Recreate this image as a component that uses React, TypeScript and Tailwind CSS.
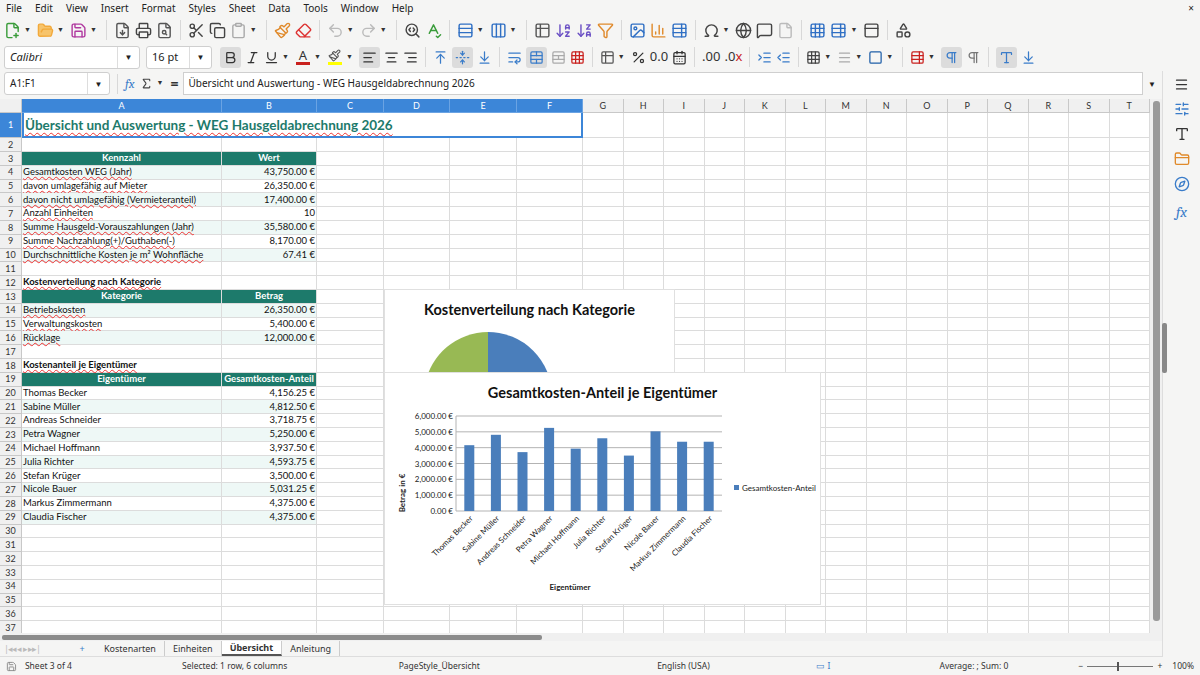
import React from "react";
import {
  FilePlus2, FolderOpen, Save, FileDown, Printer, FileSearch, Scissors, Copy, Clipboard,
  Paintbrush, Eraser, Undo2, Redo2, SearchCode, SpellCheck, Rows3, Columns3, ArrowDownAZ,
  ArrowDownZA, Filter, Image, BarChart3, Table2, Omega, Globe, MessageSquare, File,
  TableProperties, Grid3x3, PanelTop, Shapes, Bold, Italic, Underline, AlignLeft, AlignCenter,
  AlignRight, ArrowUpToLine, FoldVertical, ArrowDownToLine, WrapText, TableCellsMerge,
  TableCellsSplit, Percent, CalendarDays, IndentIncrease, IndentDecrease, Square, Pilcrow,
  Menu, SlidersHorizontal, Type, FolderClosed, Compass, Sigma,
} from "lucide-react";

const COLS = ["A", "B", "C", "D", "E", "F", "G", "H", "I", "J", "K", "L", "M", "N", "O", "P", "Q", "R", "S", "T"];
const COLW = [
  "w-[200px]", "w-[95px]", "w-[67px]", "w-[66px]", "w-[67px]", "w-[66px]",
  "w-[40.5px]", "w-[40.5px]", "w-[40.5px]", "w-[40.5px]", "w-[40.5px]", "w-[40.5px]", "w-[40.5px]",
  "w-[40.5px]", "w-[40.5px]", "w-[40.5px]", "w-[40.5px]", "w-[40.5px]", "w-[40.5px]", "w-[40.5px]",
];

type Cell = { a?: string; b?: string; kind?: "head" | "light" | "plain" | "section" };
const DATA: Record<number, Cell> = {
  3: { a: "Kennzahl", b: "Wert", kind: "head" },
  4: { a: "Gesamtkosten WEG (Jahr)", b: "43,750.00 €", kind: "light" },
  5: { a: "davon umlagefähig auf Mieter", b: "26,350.00 €", kind: "plain" },
  6: { a: "davon nicht umlagefähig (Vermieteranteil)", b: "17,400.00 €", kind: "light" },
  7: { a: "Anzahl Einheiten", b: "10", kind: "plain" },
  8: { a: "Summe Hausgeld-Vorauszahlungen (Jahr)", b: "35,580.00 €", kind: "light" },
  9: { a: "Summe Nachzahlung(+)/Guthaben(-)", b: "8,170.00 €", kind: "plain" },
  10: { a: "Durchschnittliche Kosten je m² Wohnfläche", b: "67.41 €", kind: "light" },
  12: { a: "Kostenverteilung nach Kategorie", kind: "section" },
  13: { a: "Kategorie", b: "Betrag", kind: "head" },
  14: { a: "Betriebskosten", b: "26,350.00 €", kind: "light" },
  15: { a: "Verwaltungskosten", b: "5,400.00 €", kind: "plain" },
  16: { a: "Rücklage", b: "12,000.00 €", kind: "light" },
  18: { a: "Kostenanteil je Eigentümer", kind: "section" },
  19: { a: "Eigentümer", b: "Gesamtkosten-Anteil", kind: "head" },
};

const OWNERS: [string, number][] = [
  ["Thomas Becker", 4156.25], ["Sabine Müller", 4812.5], ["Andreas Schneider", 3718.75],
  ["Petra Wagner", 5250], ["Michael Hoffmann", 3937.5], ["Julia Richter", 4593.75],
  ["Stefan Krüger", 3500], ["Nicole Bauer", 5031.25], ["Markus Zimmermann", 4375],
  ["Claudia Fischer", 4375],
];
OWNERS.forEach(([n, v], i) => {
  DATA[20 + i] = {
    a: n,
    b: v.toLocaleString("en-US", { minimumFractionDigits: 2 }) + " €",
    kind: i % 2 === 1 ? "light" : "plain",
  };
});

const ic = "w-[17px] h-[17px]";

function Sep() {
  return <div className="w-px h-[20px] bg-[#d8d8d8] mx-[3px]" />;
}
function Drop() {
  return <span className="text-[7px] text-[#333] -ml-[1px] mr-[2px]">▼</span>;
}

function Toolbar1() {
  return (
    <div className="h-[26px] flex items-center px-[4px] gap-[4px]">
      <FilePlus2 className={ic + " text-[#3a9c3a]"} /><Drop />
      <FolderOpen className={ic + " text-[#f2a93b]"} fill="#f7c46b" /><Drop />
      <Save className={ic + " text-[#b03aa0]"} /><Drop />
      <Sep />
      <FileDown className={ic + " text-[#555]"} />
      <Printer className={ic + " text-[#444]"} />
      <FileSearch className={ic + " text-[#555]"} />
      <Sep />
      <Scissors className={ic + " text-[#444]"} />
      <Copy className={ic + " text-[#444]"} />
      <Clipboard className={ic + " text-[#aaa]"} /><Drop />
      <Sep />
      <Paintbrush className={ic + " text-[#e08a2b]"} />
      <Eraser className={ic + " text-[#d33]"} />
      <Sep />
      <Undo2 className={ic + " text-[#bbb]"} /><Drop />
      <Redo2 className={ic + " text-[#bbb]"} /><Drop />
      <Sep />
      <SearchCode className={ic + " text-[#444]"} />
      <SpellCheck className={ic + " text-[#3a9c3a]"} />
      <Sep />
      <Rows3 className={ic + " text-[#2f6fc4]"} /><Drop />
      <Columns3 className={ic + " text-[#2f6fc4]"} /><Drop />
      <Sep />
      <Table2 className={ic + " text-[#555]"} />
      <ArrowDownAZ className={ic + " text-[#6a4fc4]"} />
      <ArrowDownZA className={ic + " text-[#6a4fc4]"} />
      <Filter className={ic + " text-[#e08a2b]"} />
      <Sep />
      <Image className={ic + " text-[#2f6fc4]"} />
      <BarChart3 className={ic + " text-[#e08a2b]"} />
      <TableProperties className={ic + " text-[#2f6fc4]"} />
      <Sep />
      <Omega className={ic + " text-[#444]"} /><Drop />
      <Globe className={ic + " text-[#444]"} />
      <MessageSquare className={ic + " text-[#444]"} />
      <File className={ic + " text-[#bbb]"} />
      <Sep />
      <Grid3x3 className={ic + " text-[#2f6fc4]"} />
      <TableProperties className={ic + " text-[#2f6fc4]"} /><Drop />
      <PanelTop className={ic + " text-[#444]"} />
      <Sep />
      <Shapes className={ic + " text-[#444]"} />
    </div>
  );
}

function Toolbar2() {
  const hl = "bg-[#dcdcdc] rounded-[3px] p-[3px]";
  return (
    <div className="h-[28px] flex items-center px-[4px] gap-[4px]">
      <div className="w-[136px] h-[23px] bg-white border border-[#cfcfcf] rounded-[3px] flex items-center">
        <span className="flex-1 pl-[5px] italic text-[11px] text-[#222]">Calibri</span>
        <div className="w-[22px] h-full border-l border-[#ddd] flex items-center justify-center text-[8px]">▼</div>
      </div>
      <div className="w-[66px] h-[23px] bg-white border border-[#cfcfcf] rounded-[3px] flex items-center ml-[2px]">
        <span className="flex-1 pl-[5px] text-[11px] text-[#222]">16 pt</span>
        <div className="w-[22px] h-full border-l border-[#ddd] flex items-center justify-center text-[8px]">▼</div>
      </div>
      <div className={hl + " ml-[4px]"}><Bold className="w-[15px] h-[15px] text-[#333]" /></div>
      <Italic className="w-[15px] h-[15px] text-[#333]" />
      <Underline className="w-[15px] h-[15px] text-[#333]" /><Drop />
      <div className="flex flex-col items-center w-[16px]">
        <span className="text-[13px] leading-[13px] text-[#333]">A</span>
        <div className="w-[14px] h-[3px] bg-[#c9211e]" />
      </div><Drop />
      <div className="flex flex-col items-center w-[16px]">
        <Paintbrush className="w-[13px] h-[13px] text-[#555]" />
        <div className="w-[14px] h-[3px] bg-[#ffff00]" />
      </div><Drop />
      <div className={hl}><AlignLeft className="w-[15px] h-[15px] text-[#333]" /></div>
      <AlignCenter className="w-[15px] h-[15px] text-[#333]" />
      <AlignRight className="w-[15px] h-[15px] text-[#333]" />
      <Sep />
      <ArrowUpToLine className="w-[15px] h-[15px] text-[#3a7cc9]" />
      <div className={hl}><FoldVertical className="w-[15px] h-[15px] text-[#3a7cc9]" /></div>
      <ArrowDownToLine className="w-[15px] h-[15px] text-[#3a7cc9]" />
      <Sep />
      <WrapText className="w-[15px] h-[15px] text-[#3a7cc9]" />
      <div className={hl}><TableCellsMerge className="w-[15px] h-[15px] text-[#3a7cc9]" /></div>
      <TableCellsSplit className="w-[15px] h-[15px] text-[#aaa]" />
      <Grid3x3 className="w-[15px] h-[15px] text-[#c9211e]" />
      <Sep />
      <Table2 className="w-[15px] h-[15px] text-[#555]" /><Drop />
      <Percent className="w-[15px] h-[15px] text-[#333]" />
      <span className="text-[13px] text-[#333]">0.0</span>
      <CalendarDays className="w-[15px] h-[15px] text-[#333]" />
      <Sep />
      <span className="text-[13px] text-[#333]">.00</span>
      <span className="text-[13px] text-[#333]">.0<span className="text-[#c9211e]">x</span></span>
      <Sep />
      <IndentIncrease className="w-[15px] h-[15px] text-[#3a7cc9]" />
      <IndentDecrease className="w-[15px] h-[15px] text-[#3a7cc9]" />
      <Sep />
      <Grid3x3 className="w-[15px] h-[15px] text-[#444]" /><Drop />
      <Menu className="w-[15px] h-[15px] text-[#aaa]" /><Drop />
      <Square className="w-[15px] h-[15px] text-[#1f5fa8]" /><Drop />
      <Sep />
      <TableProperties className="w-[15px] h-[15px] text-[#c9211e]" /><Drop />
      <div className={hl}><Pilcrow className="w-[15px] h-[15px] text-[#3a7cc9]" /></div>
      <Pilcrow className="w-[15px] h-[15px] text-[#777]" />
      <Sep />
      <div className={hl}><Type className="w-[15px] h-[15px] text-[#3a7cc9]" /></div>
      <ArrowDownToLine className="w-[15px] h-[15px] text-[#3a7cc9]" />
    </div>
  );
}

function FormulaBar() {
  return (
    <div className="h-[26px] flex items-center px-[4px] gap-[5px]">
      <div className="w-[106px] h-[23px] bg-white border border-[#cfcfcf] rounded-[3px] flex items-center">
        <span className="flex-1 pl-[5px] text-[10px] text-[#222]">A1:F1</span>
        <div className="w-[22px] h-full border-l border-[#ddd] flex items-center justify-center text-[8px]">▼</div>
      </div>
      <div className="w-px h-[20px] bg-[#d8d8d8] mx-[2px]" />
      <span className="italic text-[13px] text-[#3a7cc9] font-serif">fx</span>
      <Sigma className="w-[13px] h-[13px] text-[#444]" /><Drop />
      <span className="text-[14px] text-[#333] font-bold">=</span>
      <div className="flex-1 h-[23px] bg-white border border-[#cfcfcf] flex items-center pl-[4px] text-[10px] text-[#222]">
        Übersicht und Auswertung - WEG Hausgeldabrechnung 2026
      </div>
      <span className="text-[8px] w-[10px]">▼</span>
    </div>
  );
}

function Row({ r }: { r: number }) {
  const d = DATA[r];
  const h = r === 1 ? "h-[25px]" : "h-[13.8px]";
  return (
    <div className={"flex " + h}>
      <div
        className={
          "w-[22px] shrink-0 border-r border-b border-[#c8c8c8] flex items-center justify-center text-[9px] " +
          (r === 1 ? "bg-[#3c86d8] text-white" : "bg-[#f0f0f0] text-[#333]")
        }
      >
        {r}
      </div>
      {r === 1 ? (
        <>
          <div className="w-[561px] shrink-0 border-2 border-[#3c86d8] border-t-0 flex items-center pl-[1px] text-[13.5px] font-bold text-[#1d7a6b] underline decoration-wavy decoration-[#e33] decoration-1 underline-offset-2">
            Übersicht und Auswertung - WEG Hausgeldabrechnung 2026
          </div>
          {COLW.slice(6).map((w, i) => (
            <div key={i} className={w + " shrink-0 border-r border-b border-[#dcdcdc]"} />
          ))}
        </>
      ) : (
        COLW.map((w, i) => {
          let cls = w + " shrink-0 border-r border-b border-[#dcdcdc] px-[1px] flex items-center whitespace-nowrap overflow-visible ";
          let text: string | undefined;
          if (d && i < 2) {
            text = i === 0 ? d.a : d.b;
            if (d.kind === "head") cls += "bg-[#1d7a6b] text-white font-bold justify-center border-[#1d7a6b] ";
            else if (d.kind === "light") cls += "bg-[#eef8f6] ";
            if (d.kind === "section") cls += "font-bold ";
            if (i === 1 && d.kind !== "head") cls += "justify-end ";
          }
          const wavy = text && i === 0 && d?.kind !== "head" && r < 20;
          return (
            <div key={i} className={cls}>
              {text && (
                <span className={wavy ? "underline decoration-wavy decoration-[#e33] decoration-1" : ""}>{text}</span>
              )}
            </div>
          );
        })
      )}
    </div>
  );
}

function PieChart() {
  return (
    <div className="absolute left-[384px] top-[190px] w-[291px] h-[84px] bg-white border border-[#e0e0e0] overflow-hidden">
      <div className="text-center font-bold text-[14.5px] text-[#111] mt-[9px]">Kostenverteilung nach Kategorie</div>
      <svg className="absolute left-0 top-0" width="291" height="84">
        <path d="M103 106 L103 42 A64 64 0 0 1 167 106 Z" fill="#4a7ebb" />
        <path d="M103 106 L103 42 A64 64 0 0 0 40 95 Z" fill="#98b954" />
      </svg>
    </div>
  );
}

function BarChart() {
  const x0 = 71, x1 = 337, y0 = 138, y1 = 43;
  const slot = (x1 - x0) / OWNERS.length;
  return (
    <div className="absolute left-[384px] top-[273px] w-[437px] h-[233px] bg-white border border-[#e0e0e0]">
      <div className="absolute left-0 right-0 top-[9px] text-center font-bold text-[14.5px] text-[#111]">Gesamtkosten-Anteil je Eigentümer</div>
      <svg width="437" height="233" className="absolute left-0 top-0" fontFamily="Lato, 'Open Sans', sans-serif">
        {[0, 1, 2, 3, 4, 5, 6].map((k) => {
          const y = y0 - ((y0 - y1) * k) / 6;
          return (
            <g key={k}>
              <line x1={x0} x2={x1} y1={y} y2={y} stroke="#b3b3b3" strokeWidth="1" />
              <text x={x0 - 3} y={y + 3} fontSize="8" textAnchor="end" fill="#222">
                {(k * 1000).toLocaleString("en-US", { minimumFractionDigits: 2 })} €
              </text>
            </g>
          );
        })}
        <line x1={x0} x2={x0} y1={y1} y2={y0} stroke="#b3b3b3" />
        {OWNERS.map(([n, v], i) => {
          const cx = x0 + slot * i + slot / 2;
          const h = ((y0 - y1) * v) / 6000;
          return (
            <g key={n}>
              <rect x={cx - 5} y={y0 - h} width="10" height={h} fill="#4a7ebb" />
              <text
                x={cx + 4}
                y={y0 + 8}
                fontSize="8"
                textAnchor="end"
                fill="#222"
                transform={`rotate(-45 ${cx + 4} ${y0 + 8})`}
              >
                {n}
              </text>
            </g>
          );
        })}
        <text x="20" y="120" fontSize="8" fontWeight="bold" transform="rotate(-90 20 120)" textAnchor="middle" fill="#222">
          Betrag in €
        </text>
        <text x="185" y="217" fontSize="8" fontWeight="bold" textAnchor="middle" fill="#222">Eigentümer</text>
        <rect x="349" y="112" width="5" height="5" fill="#4a7ebb" />
        <text x="357" y="118" fontSize="8" fill="#222">Gesamtkosten-Anteil</text>
      </svg>
    </div>
  );
}

function Sheet() {
  const rows = Array.from({ length: 37 }, (_, i) => i + 1);
  return (
    <div className="flex h-[534px]">
      <div className="w-[1150px] relative overflow-hidden bg-white" style={{ fontFamily: "Lato, 'Open Sans', sans-serif" }}>
        <div className="flex h-[14px] text-[9px]">
          <div className="w-[22px] shrink-0 bg-[#f0f0f0] border-r border-b border-[#c8c8c8]" />
          {COLS.map((c, i) => (
            <div
              key={c}
              className={
                COLW[i] + " shrink-0 border-r border-b flex items-center justify-center " +
                (i < 6 ? "bg-[#3c86d8] text-white border-[#6aa3e3]" : "bg-[#f0f0f0] text-[#333] border-[#c8c8c8]")
              }
            >
              {c}
            </div>
          ))}
        </div>
        <div className="text-[9.5px] text-[#111]">
          {rows.map((r) => <Row key={r} r={r} />)}
        </div>
        <PieChart />
        <BarChart />
      </div>
      <div className="w-[12px] bg-[#f0f0f0] flex justify-center pt-[2px]">
        <div className="w-[7px] h-[520px] bg-[#9a9a9a] rounded-[3px]" />
      </div>
    </div>
  );
}

function Sidebar() {
  return (
    <div className="w-[38px] bg-[#f5f5f4] border-l border-[#ddd] flex flex-col items-center pt-[6px] gap-[9px]">
      <Menu className="w-[15px] h-[15px] text-[#333]" />
      <SlidersHorizontal className="w-[16px] h-[16px] text-[#3a7cc9]" />
      <Type className="w-[16px] h-[16px] text-[#333]" />
      <FolderClosed className="w-[16px] h-[16px] text-[#e08a2b]" />
      <Compass className="w-[16px] h-[16px] text-[#3a7cc9]" />
      <span className="italic text-[15px] text-[#3a7cc9] font-serif">fx</span>
      <div className="mt-[90px] w-[5px] h-[50px] bg-[#888] rounded-[2px] -ml-[34px]" />
    </div>
  );
}

export default function App() {
  return (
    <div
      className="w-[1200px] h-[675px] bg-[#f5f5f4] overflow-hidden flex flex-col text-[#222]"
      style={{ fontFamily: "'Noto Sans', 'Open Sans', sans-serif" }}
    >
      <div className="h-[17px] flex items-center px-[6px] gap-[13px] text-[10px] relative">
        {["File", "Edit", "View", "Insert", "Format", "Styles", "Sheet", "Data", "Tools", "Window", "Help"].map((m) => (
          <span key={m}>{m}</span>
        ))}
        <span className="absolute right-[6px] text-[10px]">×</span>
      </div>
      <Toolbar1 />
      <Toolbar2 />
      <div className="flex flex-1 min-h-0">
        <div className="w-[1162px] flex flex-col">
          <FormulaBar />
          <div className="h-[3px]" />
          <Sheet />
          <div className="h-[8px] bg-[#f0f0f0] flex items-center px-[2px]">
            <div className="w-[540px] h-[5px] bg-[#8c8c8c] rounded-[2px]" />
          </div>
          <div className="h-[16px] flex items-center text-[9px] text-[#333] border-b border-[#ddd]">
            <span className="w-[68px] pl-[4px] text-[#bbb] tracking-[-1px]">|◂◂ ◂ ▸ ▸▸|</span>
            <span className="w-[28px] text-center text-[#3a7cc9]">+</span>
            {["Kostenarten", "Einheiten", "Übersicht", "Anleitung"].map((t) => (
              <span
                key={t}
                className={
                  "px-[8px] border-r border-[#ccc] h-full flex items-center " +
                  (t === "Übersicht" ? "bg-white font-bold border-b-2 border-b-[#555]" : "")
                }
              >
                {t}
              </span>
            ))}
          </div>
        </div>
        <Sidebar />
      </div>
      <div className="h-[18px] flex items-center text-[8.5px] text-[#333] px-[6px]">
        <Save className="w-[11px] h-[11px] text-[#888] mr-[8px]" />
        <span className="w-[158px]">Sheet 3 of 4</span>
        <span className="w-[218px]">Selected: 1 row, 6 columns</span>
        <span className="w-[260px]">PageStyle_Übersicht</span>
        <span className="w-[160px]">English (USA)</span>
        <span className="w-[124px] text-[#3a7cc9]">▭ I</span>
        <span className="w-[140px]">Average: ; Sum: 0</span>
        <span className="flex items-center gap-[4px]">
          − <span className="w-[66px] h-px bg-[#777] relative"><span className="absolute left-[30px] -top-[4px] w-[2px] h-[9px] bg-[#555]" /></span> +
        </span>
        <span className="ml-[10px]">100%</span>
      </div>
    </div>
  );
}
